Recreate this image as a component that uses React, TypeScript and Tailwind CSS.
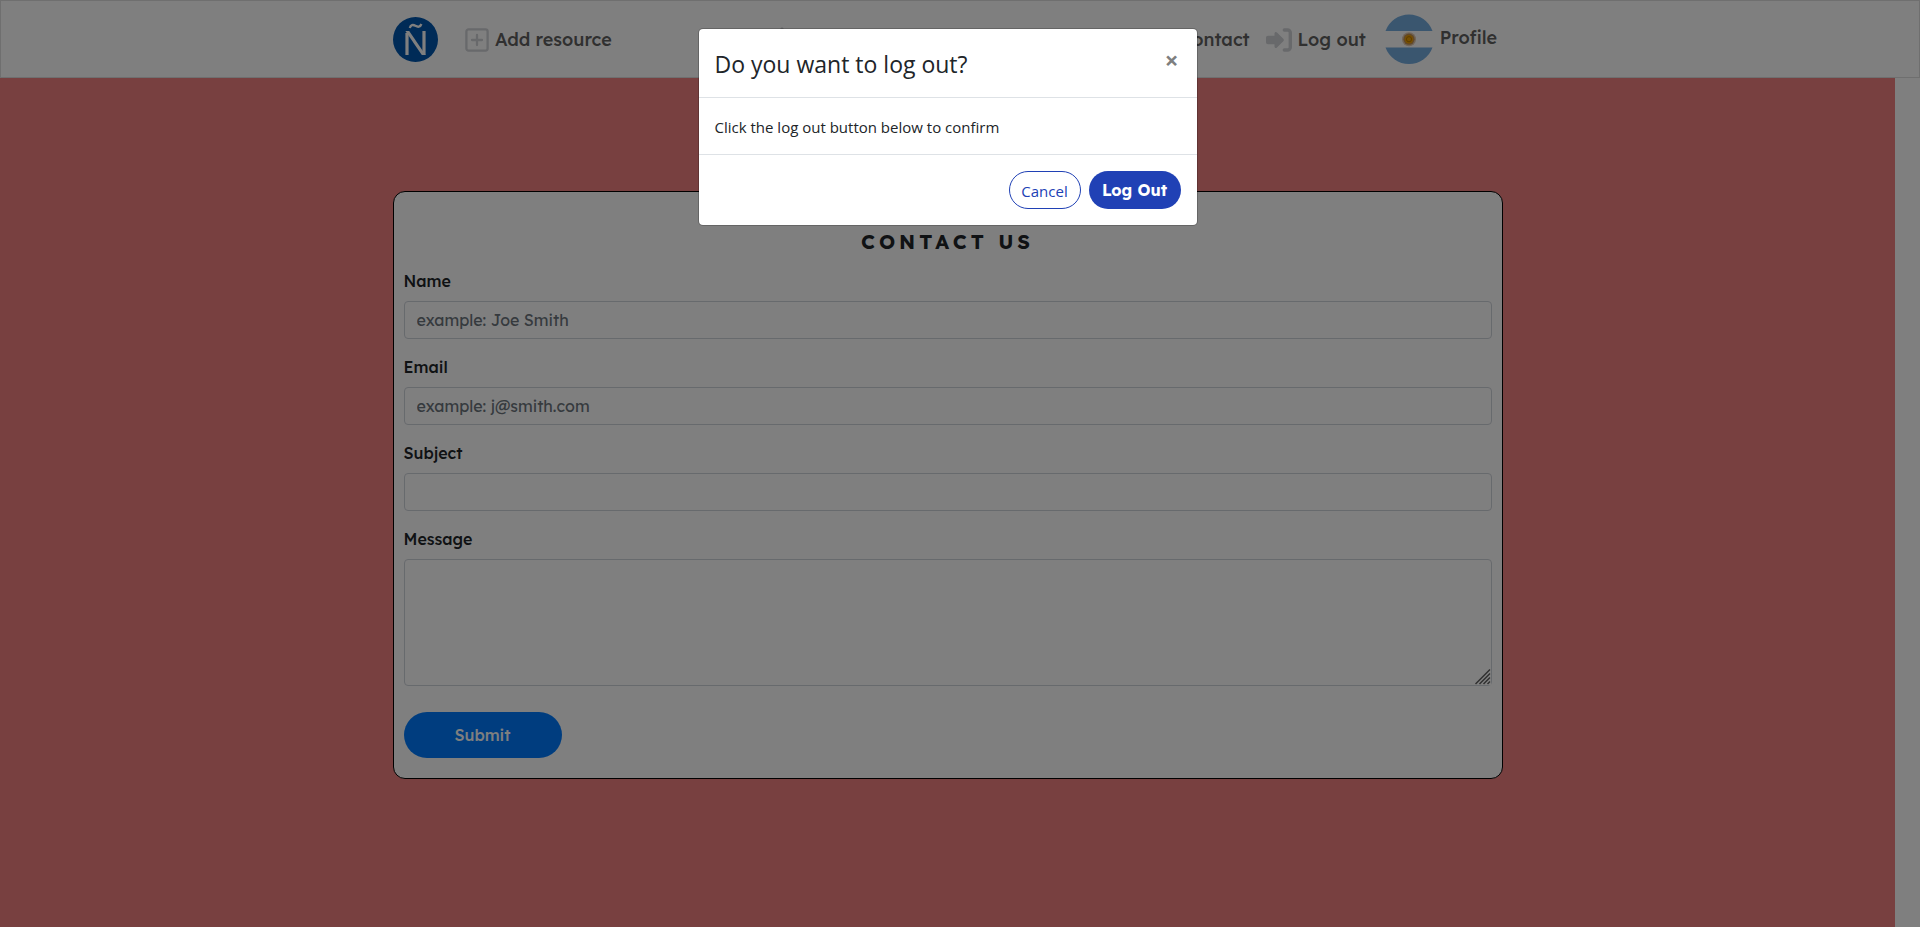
import type { ReactNode } from "react";

const lexend = "font-['Lexend','Inter',sans-serif]";

function NavLink({ icon, children, className = "" }: { icon: ReactNode; children: ReactNode; className?: string }) {
  return (
    <a href="#" className={`flex items-center gap-1.5 whitespace-nowrap text-lg font-medium text-[#606060] ${className}`}>
      {icon}
      {children}
    </a>
  );
}

function Logo() {
  return (
    <svg viewBox="0 0 45 45" className="size-[45px]" role="img" aria-label="Ñ">
      <circle cx="22.5" cy="22.5" r="22.5" fill="#0056ae" />
      <path d="M14 38V16" fill="none" stroke="#fff" strokeWidth="3.2" />
      <path d="M31 38V14" fill="none" stroke="#fff" strokeWidth="3.2" />
      <path d="M12.400 14h3.800L32.600 38h-3.800z" fill="#fff" />
      <path d="M16.800 11c.8-3.300 3.200-3.600 5.600-2.200s4.800 1.600 6-1.800" fill="none" stroke="#fff" strokeWidth="2.300" />
    </svg>
  );
}

function AddIcon() {
  return (
    <svg viewBox="0 0 24 24" className="size-6" fill="none" stroke="#d0d2d6" strokeWidth="2.3" strokeLinecap="round">
      <rect x="1.400" y="1.400" width="21.200" height="21.200" rx="2" />
      <path d="M12 7v10M7 12h10" />
    </svg>
  );
}

function HomeIcon() {
  return (
    <svg viewBox="0 0 24 26" className="h-[26px] w-6" fill="#d0d2d6">
      <path d="M12 0L0 12h3v13h6v-7h6v7h6V12h3z" />
    </svg>
  );
}

function ResourcesIcon() {
  return (
    <svg viewBox="0 0 24 24" className="size-6" fill="#d0d2d6">
      <path d="M3 1h8c1 0 1 1 1 2 0-1 0-2 1-2h8v20h-8l-1 2-1-2H3z" />
    </svg>
  );
}

function MailIcon() {
  return (
    <svg viewBox="0 0 24 18" className="h-[18px] w-6" fill="#d0d2d6">
      <path d="M2 0h20v3L12 10 2 3zM2 5l10 7 10-7v13H2z" />
    </svg>
  );
}

function LogOutIcon() {
  return (
    <svg viewBox="0 0 26 24" className="h-6 w-[26px]">
      <path d="M2 7.800h6.500V5.500c0-1.500 1.500-2 2.500-1l6.300 6.300c.7.700.7 1.700 0 2.400l-6.300 6.300c-1 1-2.500.5-2.500-1v-2.300H2c-1.200 0-2-.8-2-2v-4.400c0-1.200.8-2 2-2z" fill="#d0d2d6" />
      <path d="M18.300 2h3.200A2.700 2.700 0 0 1 24.300 4.700v14.600a2.700 2.700 0 0 1-2.800 2.700H18.300" fill="none" stroke="#d0d2d6" strokeWidth="3.400" strokeLinecap="round" />
    </svg>
  );
}

function Flag() {
  return (
    <svg viewBox="0 0 50 50" className="size-[50px]" role="img" aria-label="Argentina">
      <path d="M1.500 17A25 25 0 0 1 48.500 17z" fill="#74acdf" />
      <path d="M1.500 33.500A25 25 0 0 0 48.500 33.500z" fill="#74acdf" />
      <circle cx="25" cy="25.200" r="7" fill="#c08a50" opacity=".45" />
      <circle cx="25" cy="25.200" r="5.600" fill="#b47a30" opacity=".7" />
      <circle cx="25" cy="25.200" r="4.200" fill="#f0a000" />
      <circle cx="25" cy="25.200" r="2.600" fill="none" stroke="#b87800" strokeWidth="1" />
    </svg>
  );
}

function ResizeGrip() {
  return (
    <svg viewBox="0 0 16 16" className="pointer-events-none absolute right-px bottom-px size-4" aria-hidden="true">
      <path d="M0 0h16v16H0z" fill="#fff" />
      <path d="M0.500 15L15 0.500M4.500 15L15 4.500M8.500 15L15 8.500M12.500 15L15 12.500" fill="none" stroke="#606060" strokeWidth="1.500" />
    </svg>
  );
}

const fieldClass =
  "block w-full rounded border border-[#ced4da] bg-white px-3 text-base text-[#495057] placeholder:text-[#6c757d]";

function Field({ id, label, type = "text", placeholder }: { id: string; label: string; type?: string; placeholder?: string }) {
  return (
    <div className="mb-4">
      <label htmlFor={id} className="mb-2 block font-medium">{label}</label>
      <input id={id} type={type} placeholder={placeholder} className={`${fieldClass} h-[38px]`} />
    </div>
  );
}

export default function App() {
  return (
    <div className={`relative flex min-h-screen flex-col bg-white text-base text-[#212529] ${lexend}`}>
      <nav className="border border-[#dedede] pr-6">
        <div className="mx-auto flex h-[76px] max-w-[1110px] items-center pt-px">
          <a href="#" className="mr-[27px]"><Logo /></a>
          <NavLink icon={<AddIcon />} className="mr-[158px]">Add resource</NavLink>
          <NavLink icon={<HomeIcon />} className="w-60">Home</NavLink>
          <NavLink icon={<ResourcesIcon />}>Resources</NavLink>
          <NavLink icon={<MailIcon />} className="ml-auto">Contact</NavLink>
          <NavLink icon={<LogOutIcon />} className="ml-4">Log out</NavLink>
          <NavLink icon={<Flag />} className="mr-1.5 ml-[18px] pb-0.5">
            <span className="pb-0.5">Profile</span>
          </NavLink>
        </div>
      </nav>

      <main className="mr-[25px] grow bg-[#f08080] px-4 pt-[113px] pb-12">
        <form className="mx-auto max-w-[1110px] rounded-xl border border-black bg-white px-[10px] pt-[38px] pb-5" onSubmit={(e) => e.preventDefault()}>
          <h1 className="mb-[15px] text-center text-xl leading-6 font-bold tracking-[4px]">CONTACT US</h1>
          <Field id="name" label="Name" placeholder="example: Joe Smith" />
          <Field id="email" label="Email" type="email" placeholder="example: j@smith.com" />
          <Field id="subject" label="Subject" />
          <label htmlFor="message" className="mb-2 block font-medium">Message</label>
          <div className="relative">
            <textarea id="message" className={`${fieldClass} h-[127px] resize-y py-1.5`} />
            <ResizeGrip />
          </div>
          <button type="submit" className="mt-[26px] block h-[46px] w-[158px] rounded-full bg-[#007bff] font-medium text-white">Submit</button>
        </form>
      </main>

      <div className="absolute inset-0 bg-black/50 px-4 pt-7 pr-[41px]">
        <div role="dialog" aria-modal="true" aria-labelledby="dialog-title" className="mx-auto max-w-[500px] rounded-[5px] border border-black/20 bg-white bg-clip-padding font-['Segoe_UI','Open_Sans',sans-serif] text-[15px] leading-6">
          <header className="flex items-start justify-between border-b border-[#dee2e6] px-4 pt-[17px] pb-[15px]">
            <h2 id="dialog-title" className="text-[23px] leading-9">Do you want to log out?</h2>
            <button type="button" aria-label="Close" className="px-0.5 text-2xl leading-7 font-bold text-[#7f7f7f]">×</button>
          </header>
          <p className="border-b border-[#dee2e6] px-4 pt-[17px] pb-[15px]">Click the log out button below to confirm</p>
          <footer className="flex justify-end gap-2 p-4">
            <button type="button" className="h-[38px] w-[72px] rounded-full border border-[#2041b5] pt-0.5 text-[#2041b5]">Cancel</button>
            <button type="button" className={`h-[38px] w-[92px] rounded-full bg-[#2041b5] text-base font-bold text-white ${lexend}`}>Log Out</button>
          </footer>
        </div>
      </div>
    </div>
  );
}
